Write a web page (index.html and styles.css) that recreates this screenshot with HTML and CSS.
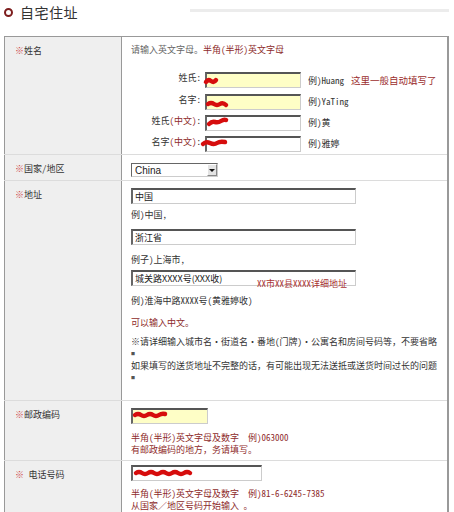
FILE: index.html
```html
<!DOCTYPE html>
<html lang="zh-CN">
<head>
    <meta charset="UTF-8">
    <meta name="viewport" content="width=device-width, initial-scale=1.0">
    <title>自宅住址</title>
    <link rel="stylesheet" href="styles.css">
</head>
<body>
    <div class="head">
        <span class="dot"></span>
        <h1>自宅住址</h1>
        <span class="rule"></span>
    </div>

    <table class="form">
        <colgroup>
            <col class="col-label">
            <col>
        </colgroup>

        <!-- 姓名 -->
        <tr class="row-name">
            <th><span class="mark">※</span>姓名</th>
            <td>
                <p class="hint">请输入英文字母。<span class="red">半角(半形)英文字母</span></p>
                <div class="names">
                    <label>姓氏:</label>
                    <div class="field">
                        <input class="txt yellow" type="text">
                        <svg class="scribble s-n1" viewBox="0 0 15 8"><path d="M3 5 q2 -3 5 -1 t5 -1"/></svg>
                    </div>
                    <span class="ex">例)Huang<span class="auto">这里一般自动填写了</span></span>

                    <label>名字:</label>
                    <div class="field">
                        <input class="txt yellow" type="text">
                        <svg class="scribble s-n2" viewBox="0 0 24 8"><path d="M3 4 q3 -2 6 0 t6 0 t6 1"/></svg>
                    </div>
                    <span class="ex">例)YaTing</span>

                    <label>姓氏<span class="cn">(中文)</span>:</label>
                    <div class="field">
                        <input class="txt" type="text">
                        <svg class="scribble s-n3" viewBox="0 0 22 9"><path d="M3 6 q3 -3 6 -2 t6 -1 t5 -1"/></svg>
                    </div>
                    <span class="ex">例)黄</span>

                    <label>名字<span class="cn">(中文)</span>:</label>
                    <div class="field">
                        <input class="txt" type="text">
                        <svg class="scribble s-n4" viewBox="0 0 29 8"><path d="M3 5 q3 -3 7 -1 t7 0 t8 -1"/></svg>
                    </div>
                    <span class="ex">例)雅婷</span>
                </div>
            </td>
        </tr>

        <!-- 国家/地区 -->
        <tr class="row-country">
            <th><span class="mark">※</span>国家/地区</th>
            <td>
                <div class="select">
                    <select>
                        <option>China</option>
                    </select>
                    <span class="arrow"></span>
                </div>
            </td>
        </tr>

        <!-- 地址 -->
        <tr class="row-addr">
            <th><span class="mark">※</span>地址</th>
            <td>
                <input class="txt wide" type="text" value="中国">
                <p class="ex1">例)中国,</p>
                <input class="txt wide gap-in" type="text" value="浙江省">
                <p class="ex2">例子)上海市,</p>
                <div class="field wide-field">
                    <input class="txt wide" type="text" value="城关路XXXX号(XXX收)">
                    <span class="addr-tip">XX市XX县XXXX详细地址</span>
                </div>
                <p class="ex3">例)淮海中路XXXX号(黄雅婷收)</p>
                <p class="red can-cn">可以输入中文。</p>
                <p class="notice">※请详细输入城市名・街道名・番地(门牌)・公寓名和房间号码等，不要省略<br><span class="tail">■</span><br>如果填写的送货地址不完整的话，有可能出现无法送抵或送货时间过长的问题<br><span class="tail">■</span></p>
            </td>
        </tr>

        <!-- 邮政编码 -->
        <tr class="row-zip">
            <th><span class="mark">※</span>邮政编码</th>
            <td>
                <div class="field">
                    <input class="txt yellow zip" type="text">
                    <svg class="scribble s-zip" viewBox="0 0 36 9"><path d="M3 5 q3 -2 6 0 t6 0 t6 0 t6 0 t6 -1"/></svg>
                </div>
                <p class="red small">半角(半形)英文字母及数字　例)063000<br>有邮政编码的地方，务请填写。</p>
            </td>
        </tr>

        <!-- 电话号码 -->
        <tr class="row-tel">
            <th><span class="mark">※</span> 电话号码</th>
            <td>
                <div class="field">
                    <input class="txt tel" type="text">
                    <svg class="scribble s-tel" viewBox="0 0 60 8"><path d="M3 4 q3 -2 6 0 t6 0 t6 0 t6 0 t6 0 t6 0 t6 0 t6 0 t6 0"/></svg>
                </div>
                <p class="red small tel-note">半角(半形)英文字母及数字　例)81-6-6245-7385<br>从国家／地区号码开始输入 。</p>
            </td>
        </tr>
    </table>
</body>
</html>
```

FILE: styles.css
```css
body {
    margin: 0;
    background-color: #fff;
    color: #333;
    font-family: "Noto Sans Mono CJK SC", "Noto Sans CJK SC", sans-serif;
    font-size: 9px;
    line-height: 12px;
}
p {
    margin: 0;
}

/* titulo */
.head {
    display: flex;
    align-items: center;
    width: 445px;
    height: 24px;
    padding-left: 4px;
    margin-bottom: 12px;
}
.dot {
    width: 9px;
    height: 9px;
    box-sizing: border-box;
    border: 2.5px solid #7d1e1e;
    border-radius: 50%;
}
.head h1 {
    margin: 0 0 0 7px;
    font-family: "Noto Sans CJK SC", sans-serif;
    font-size: 14px;
    font-weight: normal;
    letter-spacing: 0.5px;
    color: #333;
}
.rule {
    align-self: flex-start;
    width: 259px;
    height: 3px;
    margin-top: 9px;
    margin-left: auto;
    background-color: #ececec;
}

/* tabela */
.form {
    margin-left: 4px;
    width: 445px;
    border-collapse: collapse;
    table-layout: fixed;
    border: 1px solid #999;
    border-right-width: 2px;
}
.col-label {
    width: 117px;
}
.form th {
    padding: 8px 0 0 10px;
    background-color: #efefef;
    border-right: 1px solid #999;
    border-bottom: 1px solid #dcdcdc;
    font-weight: normal;
    text-align: left;
    vertical-align: top;
    white-space: nowrap;
}
.form td {
    padding: 7px 0 0 9px;
    border-bottom: 1px solid #dcdcdc;
    vertical-align: top;
}
.mark {
    color: #c44;
}
.red {
    color: #8e2b2b;
}
.hint {
    color: #666;
}

/* campos */
.txt {
    display: block;
    height: 16px;
    margin: 0;
    padding: 0 2px;
    box-sizing: border-box;
    border-style: solid;
    border-width: 2px 1px 1px 2px;
    border-color: #555 #ccc #ccc #666;
    background-color: #fff;
    font-family: "Noto Sans CJK SC", sans-serif;
    font-size: 9px;
    color: #222;
    outline: none;
}
.yellow {
    background-color: #fefec6;
}
.field {
    position: relative;
}
.scribble {
    position: absolute;
    pointer-events: none;
    overflow: visible;
}
.scribble path {
    fill: none;
    stroke: #d60d0d;
    stroke-width: 4.5;
    stroke-linecap: round;
    stroke-linejoin: round;
}

/* nome */
.row-name td {
    padding-bottom: 2px;
}
.names {
    display: grid;
    grid-template-columns: 70px 96px auto;
    column-gap: 4px;
    row-gap: 5px;
    align-items: start;
    margin-top: 16px;
}
.names label {
    text-align: right;
    white-space: nowrap;
}
.names .cn {
    color: #8e2b2b;
}
.names .txt {
    width: 96px;
}
.names .ex {
    padding-left: 3px;
    line-height: 16px;
    white-space: nowrap;
}
.auto {
    margin-left: 7px;
    color: #9b2d2d;
    font-size: 9.5px;
}
.s-n1 { left: -2px; top: 5px; width: 15px; height: 8px; }
.s-n2 { left: 0; top: 6px; width: 24px; height: 8px; }
.s-n3 { left: 1px; top: 3px; width: 22px; height: 9px; }
.s-n4 { left: -5px; top: 3px; width: 29px; height: 8px; }

/* pais */
.row-country td {
    padding: 8px 0 3px 9px;
}
.select {
    display: flex;
    width: 87px;
    height: 14px;
    box-sizing: border-box;
    border-style: solid;
    border-width: 1px;
    border-color: #666 #ccc #ccc #666;
    background-color: #fff;
}
.select select {
    flex: 1;
    min-width: 0;
    height: 100%;
    padding: 0 3px;
    border: 0;
    background: transparent;
    -webkit-appearance: none;
    appearance: none;
    font-family: "Liberation Sans", Arial, sans-serif;
    font-size: 10px;
    color: #222;
}
.arrow {
    display: flex;
    align-items: center;
    justify-content: center;
    width: 10px;
    box-sizing: border-box;
    background-color: #e4e4e4;
    border: 1px solid;
    border-color: #fff #888 #888 #fff;
}
.arrow::after {
    content: "";
    border-left: 3px solid transparent;
    border-right: 3px solid transparent;
    border-top: 3px solid #111;
}

/* endereco */
.row-addr td {
    padding-bottom: 16px;
}
.wide {
    width: 225px;
}
.wide-field {
    width: 225px;
    margin-top: 4px;
}
.ex1 { margin-top: 5px; }
.gap-in { margin-top: 8px; }
.ex2 { margin-top: 9px; }
.ex3 { margin-top: 9px; }
.can-cn { margin-top: 10px; }
.notice {
    margin-top: 7px;
    line-height: 11px;
    white-space: nowrap;
}
.notice .tail {
    font-size: 4px;
    color: #555;
}
.addr-tip {
    position: absolute;
    left: 126px;
    top: 8px;
    color: #a33;
    white-space: nowrap;
}

/* cep e telefone */
.row-zip td {
    padding-bottom: 4px;
}
.row-tel td {
    padding-top: 4px;
}
.zip {
    width: 77px;
}
.tel {
    width: 131px;
    background-color: #fff;
}
.small {
    margin-top: 8px;
    line-height: 12px;
    white-space: nowrap;
}
.small.tel-note {
    margin-top: 7px;
}
.s-zip { left: 1px; top: 2px; width: 36px; height: 9px; }
.s-tel { left: 2px; top: 4px; width: 60px; height: 8px; }
```
